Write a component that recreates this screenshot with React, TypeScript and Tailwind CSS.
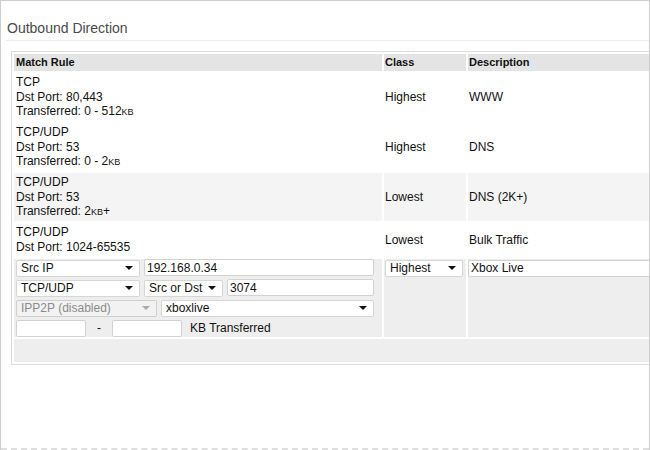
import React from "react";

function Kb() {
  return <span className="text-[9px] leading-none">KB</span>;
}

function Select({ value, width, disabled }: { value: string; width: string; disabled?: boolean }) {
  return (
    <div className={`relative h-[17px] ${width}`}>
      <select
        value={value}
        disabled={disabled}
        onChange={() => {}}
        className={`h-full w-full appearance-none rounded-[2px] border pl-[4px] text-[12px] leading-[15px] outline-none ${
          disabled ? "border-[#cfcfcf] bg-[#f2f2f2] text-[#8a8a8a]" : "border-[#d6d6d6] bg-white text-[#111]"
        }`}
      >
        <option>{value}</option>
      </select>
      <span
        className={`pointer-events-none absolute right-[7px] top-[7px] h-0 w-0 border-x-[4px] border-t-[4px] border-x-transparent ${
          disabled ? "border-t-[#aaa]" : "border-t-[#111]"
        }`}
      />
    </div>
  );
}

function TextBox({ value, width }: { value: string; width: string }) {
  return (
    <input
      value={value}
      onChange={() => {}}
      className={`h-[17px] ${width} rounded-[2px] border border-[#d2d2d2] bg-white px-[2px] text-[12px] leading-[15px] text-[#111] outline-none`}
    />
  );
}

const rules = [
  { lines: ["TCP", "Dst Port: 80,443", <>Transferred: 0 - 512<Kb /></>], cls: "Highest", desc: "WWW", bg: "bg-white" },
  { lines: ["TCP/UDP", "Dst Port: 53", <>Transferred: 0 - 2<Kb /></>], cls: "Highest", desc: "DNS", bg: "bg-white" },
  { lines: ["TCP/UDP", "Dst Port: 53", <>Transferred: 2<Kb />+</>], cls: "Lowest", desc: "DNS (2K+)", bg: "bg-[#f4f4f4]" },
  { lines: ["TCP/UDP", "Dst Port: 1024-65535"], cls: "Lowest", desc: "Bulk Traffic", bg: "bg-white" },
];

export default function App() {
  return (
    <div className="flex h-[450px] w-[650px] flex-col overflow-hidden border-x border-t border-[#cdcdcd] bg-white font-['Liberation_Sans',Arial,sans-serif] text-[12px] text-[#111]">
      <div className="flex-1 pl-[5px]">
        {/* Title */}
        <div className="border-b border-[#ececec] pl-[1px] pt-[19px] pb-[3px] text-[14px] leading-[17px] text-[#4a4a4a]">
          Outbound Direction
        </div>

        {/* Rules table */}
        <table className="ml-[5px] mt-[10px] w-[680px] table-fixed border-separate border-spacing-[2px] border border-[#dcdcdc]">
          <colgroup>
            <col className="w-[368px]" />
            <col className="w-[82px]" />
            <col className="w-[220px]" />
          </colgroup>
          <thead>
            <tr className="bg-[#e4e4e4] text-left text-[11px] font-bold leading-[17px] text-[#111]">
              <th className="px-[2px]">Match Rule</th>
              <th className="px-[1px]">Class</th>
              <th className="px-[1px]">Description</th>
            </tr>
          </thead>
          <tbody>
            {rules.map((r, i) => (
              <tr key={i} className={r.bg}>
                <td className={`px-[2px] py-[2px] leading-[14.6px] ${r.lines.length === 3 ? "h-[48px]" : "h-[34px]"}`}>
                  {r.lines.map((l, j) => (
                    <div key={j}>{l}</div>
                  ))}
                </td>
                <td className="px-[1px] align-middle">{r.cls}</td>
                <td className="px-[1px] align-middle">{r.desc}</td>
              </tr>
            ))}

            {/* Edit row */}
            <tr className="bg-[#eeeeee] align-top">
              <td className="px-[2px] py-0">
                <div className="flex flex-col gap-[3px]">
                  <div className="flex gap-[4px]">
                    <Select value="Src IP" width="w-[124px]" />
                    <TextBox value="192.168.0.34" width="w-[230px]" />
                  </div>
                  <div className="flex gap-[4px]">
                    <Select value="TCP/UDP" width="w-[124px]" />
                    <Select value="Src or Dst" width="w-[79px]" />
                    <TextBox value="3074" width="w-[147px]" />
                  </div>
                  <div className="flex gap-[4px]">
                    <Select value="IPP2P (disabled)" width="w-[141px]" disabled />
                    <Select value="xboxlive" width="w-[213px]" />
                  </div>
                  <div className="flex items-center">
                    <TextBox value="" width="w-[70px]" />
                    <span className="w-[26px] text-center">-</span>
                    <TextBox value="" width="w-[70px]" />
                    <span className="ml-[8px]">KB Transferred</span>
                  </div>
                </div>
              </td>
              <td className="px-[1px] pt-0">
                <Select value="Highest" width="w-[78px]" />
              </td>
              <td className="px-0 pt-0">
                <TextBox value="Xbox Live" width="w-[220px]" />
              </td>
            </tr>

            {/* Footer row */}
            <tr className="bg-[#eeeeee]">
              <td colSpan={3} className="h-[23px]" />
            </tr>
          </tbody>
        </table>
      </div>
      <div className="border-b-2 border-dashed border-[#dedede]" />
    </div>
  );
}
